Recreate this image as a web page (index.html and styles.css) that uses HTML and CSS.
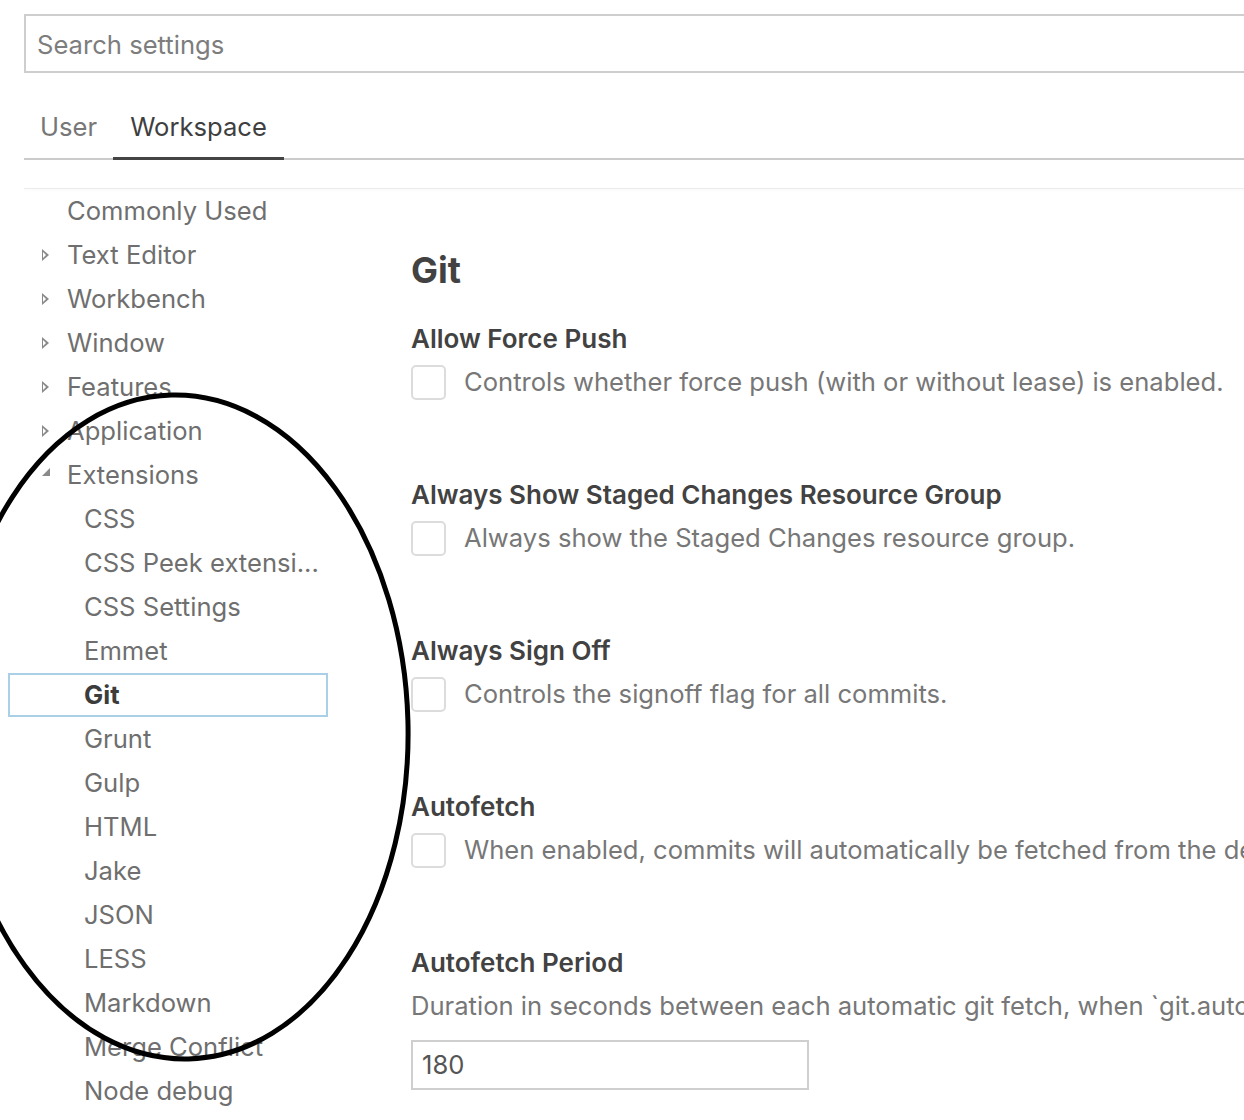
FILE: index.html
```html
<!DOCTYPE html>
<html lang="en">
<head>
  <meta charset="UTF-8">
  <meta name="viewport" content="width=device-width, initial-scale=1.0">
  <title>Settings</title>
  <link rel="stylesheet" href="styles.css">
</head>
<body>

  <div class="search">Search settings</div>

  <div class="tabs">
    <span class="tab">User</span>
    <span class="tab active">Workspace</span>
  </div>

  <div class="divider"></div>

  <div class="main">
    <ul class="toc">
      <li>Commonly Used</li>
      <li class="closed">Text Editor</li>
      <li class="closed">Workbench</li>
      <li class="closed">Window</li>
      <li class="closed">Features</li>
      <li class="closed">Application</li>
      <li class="open">Extensions</li>
      <li class="child">CSS</li>
      <li class="child">CSS Peek extensi...</li>
      <li class="child">CSS Settings</li>
      <li class="child">Emmet</li>
      <li class="child selected">Git</li>
      <li class="child">Grunt</li>
      <li class="child">Gulp</li>
      <li class="child">HTML</li>
      <li class="child">Jake</li>
      <li class="child">JSON</li>
      <li class="child">LESS</li>
      <li class="child">Markdown</li>
      <li class="child">Merge Conflict</li>
      <li class="child">Node debug</li>
    </ul>

    <div class="content">
      <h1>Git</h1>

      <div class="setting">
        <h3>Allow Force Push</h3>
        <div class="check-row">
          <span class="checkbox"></span>
          <span class="desc">Controls whether force push (with or without lease) is enabled.</span>
        </div>
      </div>

      <div class="setting">
        <h3>Always Show Staged Changes Resource Group</h3>
        <div class="check-row">
          <span class="checkbox"></span>
          <span class="desc">Always show the Staged Changes resource group.</span>
        </div>
      </div>

      <div class="setting">
        <h3>Always Sign Off</h3>
        <div class="check-row">
          <span class="checkbox"></span>
          <span class="desc">Controls the signoff flag for all commits.</span>
        </div>
      </div>

      <div class="setting">
        <h3>Autofetch</h3>
        <div class="check-row">
          <span class="checkbox"></span>
          <span class="desc">When enabled, commits will automatically be fetched from the de</span>
        </div>
      </div>

      <div class="setting">
        <h3>Autofetch Period</h3>
        <div class="desc">Duration in seconds between each automatic git fetch, when `git.auto</div>
        <div class="number">180</div>
      </div>
    </div>
  </div>

  <!-- hand-drawn highlight ring -->
  <svg class="ring" width="1244" height="1120" viewBox="0 0 1244 1120">
    <ellipse cx="180" cy="727" rx="228" ry="332" transform="rotate(-1.5 180 727)" fill="none" stroke="#000" stroke-width="5"/>
  </svg>

</body>
</html>
```

FILE: styles.css
```css
html, body {
  margin: 0;
  overflow: hidden;
  height: 1120px;
}
body {
  font-family: Inter, "Open Sans", sans-serif;
  background-color: #fff;
  color: #6f6f6f;
  font-size: 25.6px;
  width: 1400px;
}
.search {
  margin: 14px 0 0 24px;
  height: 55px;
  border: 2px solid #cecece;
  box-sizing: content-box;
  padding-left: 11px;
  line-height: 57px;
  color: #7d7d7d;
}
.tabs {
  margin: 28px 0 0 24px;
  display: flex;
  border-bottom: 2px solid #cbcbcb;
}
.tab {
  padding: 0 16px;
  height: 56px;
  line-height: 52px;
  color: #777;
  border-bottom: 3px solid transparent;
  margin-bottom: -2px;
}
.tab.active {
  color: #3f3f3f;
  border-bottom-color: #444;
  padding: 0 17px;
}
.divider {
  margin: 28px 0 0 24px;
  height: 1px;
  background: #ececec;
  box-shadow: 0 1px 3px rgba(0, 0, 0, 0.06);
}
.main {
  display: flex;
}
.toc {
  list-style: none;
  margin: 0;
  padding: 0;
  width: 411px;
  flex: none;
}
.toc li {
  height: 44px;
  line-height: 44px;
  padding-left: 67px;
  position: relative;
  white-space: nowrap;
}
.toc li.closed::before {
  content: "";
  position: absolute;
  left: 42px;
  top: 16px;
  border-left: 7px solid #8a8a8a;
  border-top: 6px solid transparent;
  border-bottom: 6px solid transparent;
}
.toc li.closed::after {
  content: "";
  position: absolute;
  left: 43px;
  top: 19px;
  border-left: 3px solid #fff;
  border-top: 3px solid transparent;
  border-bottom: 3px solid transparent;
}
.toc li.open::before {
  content: "";
  position: absolute;
  left: 42px;
  top: 15px;
  border-right: 8px solid #8a8a8a;
  border-top: 8px solid transparent;
}
.toc li.child {
  padding-left: 84px;
}
.toc li.selected {
  font-weight: 700;
  color: #3c3c3c;
}
.toc li.selected::before {
  content: "";
  position: absolute;
  left: 8px;
  top: 0;
  width: 316px;
  height: 40px;
  border: 2px solid #a9d0e6;
}
.content {
  padding-top: 46px;
  white-space: nowrap;
}
.content h1 {
  margin: 0;
  font-size: 36px;
  font-weight: 700;
  color: #424242;
  height: 85px;
  line-height: 70px;
}
.setting {
  height: 156px;
}
.setting h3 {
  margin: 0;
  font-size: 26px;
  font-weight: 600;
  color: #424242;
  height: 38px;
  line-height: 38px;
}
.check-row {
  display: flex;
  align-items: center;
  height: 48px;
}
.checkbox {
  width: 31px;
  height: 31px;
  border: 2px solid #dcdcdc;
  border-radius: 5px;
  margin-right: 18px;
  flex: none;
}
.desc {
  color: #777;
  line-height: 48px;
}
.number {
  margin-top: 10px;
  width: 385px;
  height: 46px;
  line-height: 46px;
  border: 2px solid #cfcfcf;
  padding-left: 9px;
  color: #555;
}
.ring {
  position: absolute;
  left: 0;
  top: 0;
  pointer-events: none;
}
```
